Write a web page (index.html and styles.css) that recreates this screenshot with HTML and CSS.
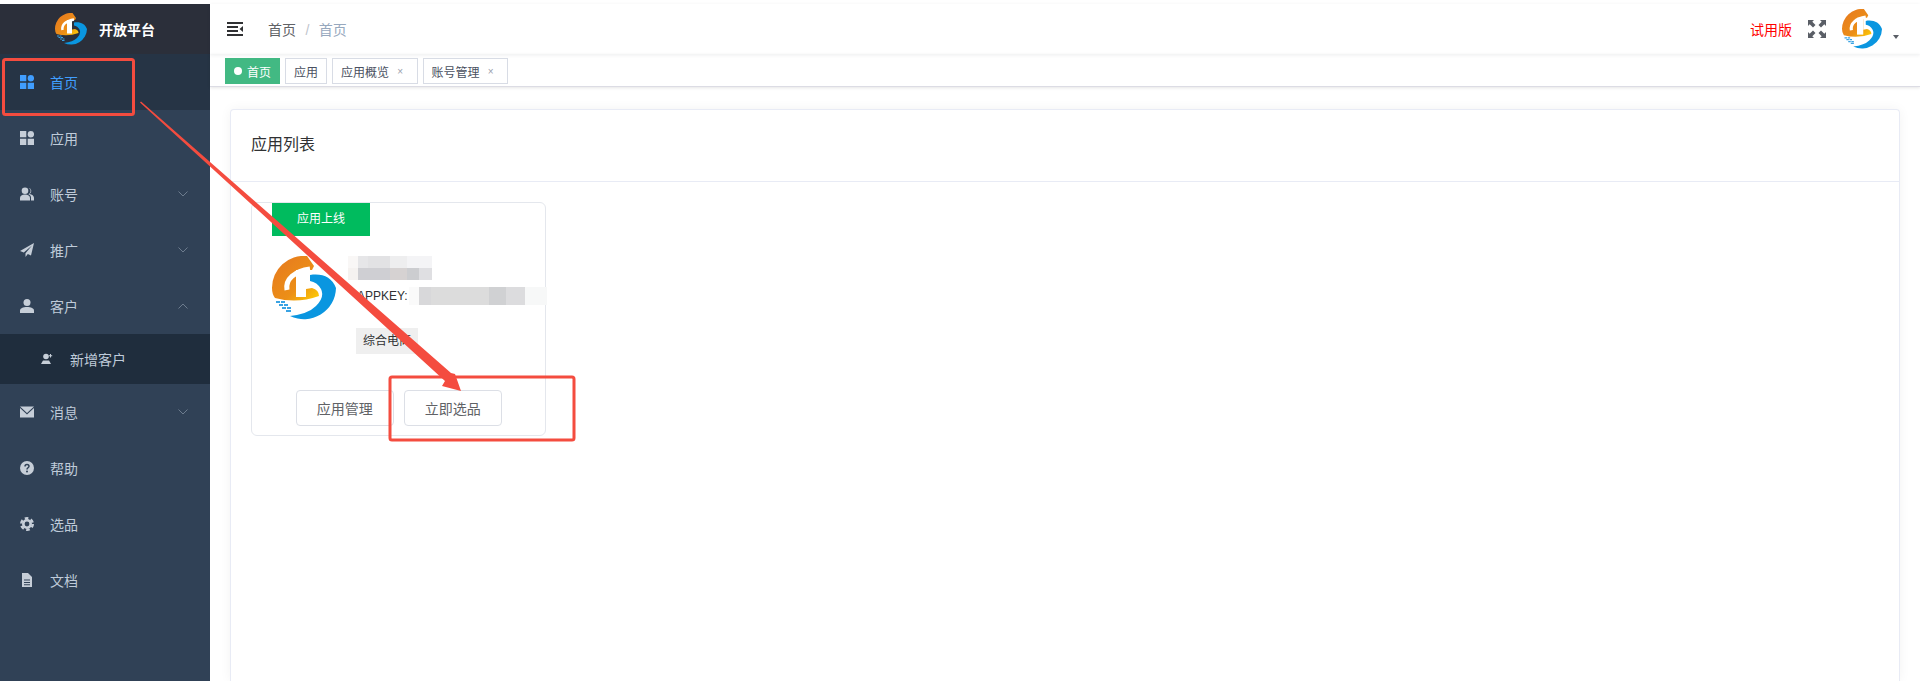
FILE: index.html
```html
<!DOCTYPE html>
<html lang="en">
  <head>
    <meta charset="UTF-8" />
    <title>开放平台</title>
    <link rel="stylesheet" href="styles.css">
  </head>
  <body>
    <!-- Shared logo -->
    <svg class="defs" width="0" height="0">
      <defs>
        <linearGradient id="logoOrange" x1="0.1" y1="0.2" x2="0.9" y2="1">
          <stop offset="0" stop-color="#e77d1e" />
          <stop offset="0.6" stop-color="#ec8f17" />
          <stop offset="1" stop-color="#fcc806" />
        </linearGradient>
        <symbol id="logo" viewBox="0 0 64 64">
          <path fill="url(#logoOrange)" d="M35 0A32 32 0 0 0 0 32Q0 38 3 42Q25 48 47 40Q47 34 40 32L34 33V14H40L42 10Z" />
          <path fill="none" stroke="#fff" stroke-width="5" d="M15 34C13 23 23 15 38 13" />
          <rect x="24" y="14" width="10" height="27" fill="#fff" />
          <path fill="#0a96e0" d="M38 19C50 17 60 21 64 32A32 32 0 0 1 18 60Q36 58 44 50Q53 41 49 33Q45 26 38 25Z" />
          <path fill="#3aa3e3" d="M4 45h4v2H4zM9 45h4v2H9zM7 48h4v2H7zM12 48h4v2h-4zM10 51h4v2h-4zM15 51h4v2h-4zM14 54h5v2h-5z" />
        </symbol>
      </defs>
    </svg>

    <div class="app">
      <!-- Sidebar -->
      <aside class="sidebar">
        <div class="brand">
          <svg class="brand-logo"><use href="#logo" /></svg>
          <span>开放平台</span>
        </div>
        <ul class="menu">
          <li class="menu-item active">
            <svg class="menu-icon" viewBox="0 0 14 14"><path d="M0 0h6.3v6.3H0zM0 7.7h6.3V14H0zM7.7 7.7H14V14H7.7z" /><circle cx="10.9" cy="3.2" r="3.2" /></svg>
            <span>首页</span>
          </li>
          <li class="menu-item">
            <svg class="menu-icon" viewBox="0 0 14 14"><path d="M0 0h6.3v6.3H0zM0 7.7h6.3V14H0zM7.7 7.7H14V14H7.7z" /><circle cx="10.9" cy="3.2" r="3.2" /></svg>
            <span>应用</span>
          </li>
          <li class="menu-item">
            <svg class="menu-icon" viewBox="0 0 14 14"><circle cx="5" cy="3.8" r="3.3" /><path d="M0 13.5V11C0 8.8 2 7.6 5 7.6S10 8.8 10 11V13.5z" /><path d="M8.6.9A3.2 3.2 0 0 1 9.6 6.9C12 7.2 14 8.6 14 10.8V13.5H11V10.5C11 9 10 7.8 8.4 7.2A3.4 3.4 0 0 0 8.6.9z" /></svg>
            <span>账号</span>
            <svg class="menu-arrow" viewBox="0 0 10 6"><path d="M.5.5 5 5 9.500.5" /></svg>
          </li>
          <li class="menu-item">
            <svg class="menu-icon" viewBox="0 0 14 14"><path d="M14 0 0 8l3.800 1.600L12 2.500 5.500 10.300V14l2.300-3L11 12.400z" /></svg>
            <span>推广</span>
            <svg class="menu-arrow" viewBox="0 0 10 6"><path d="M.5.5 5 5 9.500.5" /></svg>
          </li>
          <li class="menu-item">
            <svg class="menu-icon" viewBox="0 0 14 14"><circle cx="7" cy="3.500" r="3.500" /><path d="M0 14V11.500C0 9.300 3 8 7 8S14 9.300 14 11.500V14z" /></svg>
            <span>客户</span>
            <svg class="menu-arrow" viewBox="0 0 10 6"><path d="M.5 5.500 5 1 9.500 5.500" /></svg>
          </li>
          <li class="menu-sub">
            <svg class="sub-icon" viewBox="0 0 12 12"><circle cx="5" cy="3.500" r="2.800" /><path d="M0 11 2 7.500H8L10 11z" /><path d="M9 1h1v1.200h1.200v1H10v1.200H9V3.200H7.800v-1H9z" /></svg>
            <span>新增客户</span>
          </li>
          <li class="menu-item">
            <svg class="menu-icon" viewBox="0 0 14 11"><path d="M0 0H14L7 6.500zM0 1.500V11H14V1.500L7 8z" /></svg>
            <span>消息</span>
            <svg class="menu-arrow" viewBox="0 0 10 6"><path d="M.5.5 5 5 9.500.5" /></svg>
          </li>
          <li class="menu-item">
            <svg class="menu-icon" viewBox="0 0 14 14"><circle cx="7" cy="7" r="7" /><path class="cut" d="M5 5.500C5 2.800 9 3 9 5.300 9 6.800 7 6.800 7 8.500" /><circle class="cut-dot" cx="7" cy="10.500" r="1" /></svg>
            <span>帮助</span>
          </li>
          <li class="menu-item">
            <svg class="menu-icon" viewBox="0 0 14 14"><circle class="gear-teeth" cx="7" cy="7" r="5.800" /><circle class="gear-ring" cx="7" cy="7" r="3.700" /></svg>
            <span>选品</span>
          </li>
          <li class="menu-item">
            <svg class="menu-icon" viewBox="0 0 14 14"><path d="M2 0H8L12 4V14H2zM4 6.500V7.500H10V6.500zM4 9V10H10V9zM4 11.300V12.300H10V11.300z" fill-rule="evenodd" /></svg>
            <span>文档</span>
          </li>
        </ul>
      </aside>

      <div class="main">
        <!-- Top bar -->
        <header class="navbar">
          <svg class="hamburger" viewBox="0 0 16 14"><path d="M0 0h16v2H0zM0 4h11v2H0zM0 8h11v2H0zM0 12h16v2H0zM16 4v6l-3.500-3z" /></svg>
          <nav class="breadcrumb">
            <span>首页</span>
            <span class="sep">/</span>
            <span class="current">首页</span>
          </nav>
          <div class="navbar-right">
            <span class="trial">试用版</span>
            <svg class="fullscreen" viewBox="0 0 18 18"><path d="M0 0h6L4.300 1.700 7.500 5 5 7.500 1.700 4.300 0 6zM18 0v6l-1.700-1.700L13 7.500 10.500 5l3.200-3.300L12 0zM0 18v-6l1.700 1.700L5 10.500 7.500 13l-3.200 3.300L6 18zM18 18h-6l1.700-1.700L10.500 13l2.500-2.500 3.300 3.200L18 12z" /></svg>
            <svg class="avatar"><use href="#logo" /></svg>
            <i class="caret"></i>
          </div>
        </header>

        <!-- Tags -->
        <div class="tags">
          <span class="tag tag-active"><i class="tag-dot"></i>首页</span>
          <span class="tag">应用</span>
          <span class="tag">应用概览<i class="tag-close">×</i></span>
          <span class="tag">账号管理<i class="tag-close">×</i></span>
        </div>

        <div class="content">
          <section class="panel">
            <div class="panel-head">应用列表</div>
            <div class="panel-body">
              <div class="app-card">
                <div class="ribbon">应用上线</div>
                <div class="app-info">
                  <svg class="app-logo"><use href="#logo" /></svg>
                  <div class="app-text">
                    <div class="blur-name"></div>
                    <div class="key-row">APPKEY:<span class="blur-key"></span></div>
                    <span class="app-type">综合电商</span>
                  </div>
                </div>
                <div class="app-actions">
                  <button>应用管理</button>
                  <button>立即选品</button>
                </div>
              </div>
            </div>
          </section>
        </div>
      </div>
    </div>

    <!-- Red annotation drawn over the page -->
    <svg class="markup" viewBox="0 0 1920 681">
      <rect x="3.500" y="59.500" width="130" height="55" rx="2" />
      <rect x="390" y="377" width="184" height="63" rx="2" />
      <polygon points="140,102.500 141,101.500 451,373 455,374 461,391 442,386 445,381" />
    </svg>
  </body>
</html>
```

FILE: styles.css
```css
* {
  box-sizing: border-box;
}
html,
body {
  margin: 0;
  padding: 0;
  height: 100%;
  overflow: hidden;
  background-color: #ffffff;
  font-family: "Liberation Sans", "Noto Sans CJK SC", sans-serif;
  color: #303133;
}
.defs {
  position: absolute;
}
.app {
  display: flex;
  height: 100vh;
  padding-top: 4px;
}

/* Sidebar */
.sidebar {
  width: 210px;
  flex-shrink: 0;
  background-color: #304156;
}
.brand {
  display: flex;
  align-items: center;
  height: 50px;
  padding-left: 55px;
  background-color: #2b2f3a;
  color: #ffffff;
  font-size: 14px;
  font-weight: bold;
}
.brand-logo {
  width: 32px;
  height: 32px;
  margin-right: 12px;
}
.menu {
  list-style: none;
  margin: 0;
  padding: 0;
  font-size: 14px;
  color: #bfcbd9;
}
.menu-item {
  display: flex;
  align-items: center;
  height: 56px;
  padding: 0 22px 0 20px;
}
.menu-item.active {
  background-color: #263445;
  color: #409eff;
}
.menu-icon {
  width: 14px;
  height: 14px;
  margin-right: 16px;
  fill: #c6ced8;
}
.active .menu-icon {
  fill: #409eff;
}
.menu-arrow {
  width: 10px;
  height: 6px;
  margin-left: auto;
  fill: none;
  stroke: #6d7c8e;
}
.menu-sub {
  display: flex;
  align-items: center;
  height: 50px;
  padding-left: 41px;
  background-color: #1f2d3d;
}
.sub-icon {
  width: 12px;
  height: 12px;
  margin-right: 17px;
  fill: #c6ced8;
}
.cut {
  fill: none;
  stroke: #304156;
  stroke-width: 1.500;
}
.cut-dot {
  fill: #304156;
}
.gear-teeth {
  fill: none;
  stroke: #c6ced8;
  stroke-width: 2.400;
  stroke-dasharray: 3.600 2.500;
}
.gear-ring {
  fill: none;
  stroke: #c6ced8;
  stroke-width: 2.600;
}

/* Top bar */
.main {
  flex: 1;
  min-width: 0;
  display: flex;
  flex-direction: column;
}
.navbar {
  display: flex;
  align-items: center;
  height: 50px;
  padding: 0 21px 0 17px;
  box-shadow: 0 1px 4px rgba(0, 21, 41, 0.08);
}
.hamburger {
  width: 16px;
  height: 14px;
  margin-right: 25px;
  fill: #303133;
}
.breadcrumb {
  font-size: 14px;
  color: #606266;
}
.breadcrumb .sep {
  margin: 0 5.500px;
  color: #c0c4cc;
}
.breadcrumb .current {
  color: #97a8be;
}
.navbar-right {
  display: flex;
  align-items: center;
  margin-left: auto;
}
.trial {
  font-size: 14px;
  color: #ff0000;
  margin-right: 16px;
}
.fullscreen {
  width: 18px;
  height: 18px;
  margin-right: 16px;
  fill: #5a5e66;
}
.avatar {
  width: 40px;
  height: 40px;
}
.caret {
  width: 0;
  height: 0;
  margin: 16px 0 0 11px;
  border-left: 3.500px solid transparent;
  border-right: 3.500px solid transparent;
  border-top: 4px solid #5a5e66;
}

/* Tags */
.tags {
  display: flex;
  gap: 5px;
  height: 33px;
  padding: 4px 0 0 15px;
  border-bottom: 1px solid #dcdce4;
  box-shadow: 0 1px 3px rgba(0, 0, 0, 0.1);
}
.tag {
  display: flex;
  align-items: center;
  height: 26px;
  padding: 0 8px;
  border: 1px solid #d8dce5;
  font-size: 12px;
  color: #495060;
}
.tag-active {
  background-color: #42b983;
  border-color: #42b983;
  color: #ffffff;
}
.tag-dot {
  width: 8px;
  height: 8px;
  margin-right: 5px;
  border-radius: 50%;
  background-color: #ffffff;
}
.tag-close {
  width: 10px;
  margin: 0 3.500px 0 6px;
  font-style: normal;
  font-size: 10px;
  text-align: center;
  color: #9aa0ac;
}

/* Content */
.content {
  flex: 1;
  min-height: 0;
  padding: 22px 20px 0;
}
.panel {
  height: 100%;
  border: 1px solid #e8ebf5;
  border-bottom: none;
  border-radius: 4px 4px 0 0;
  background-color: #ffffff;
  box-shadow: 0 0 12px rgba(0, 0, 0, 0.05);
}
.panel-head {
  display: flex;
  align-items: center;
  height: 72px;
  padding: 0 0 6px 20px;
  border-bottom: 1px solid #e8ebf5;
  font-size: 16px;
}
.panel-body {
  padding: 20px;
}
.app-card {
  width: 295px;
  height: 234px;
  border: 1px solid #e4e7ed;
  border-radius: 6px;
}
.ribbon {
  width: 98px;
  height: 33px;
  margin-left: 20px;
  line-height: 33px;
  text-align: center;
  font-size: 12px;
  color: #ffffff;
  background-color: #00bb5e;
}
.app-info {
  display: flex;
  height: 119px;
  margin-top: 20px;
  padding-left: 20px;
}
.app-logo {
  width: 64px;
  height: 64px;
  flex-shrink: 0;
}
.app-text {
  margin-left: 12px;
  font-size: 12px;
}
.blur-name {
  width: 84px;
  height: 24px;
  background:
    linear-gradient(90deg, #f9f7f6 0 12%, #e6e6e8 12% 24%, #e2e2e4 24% 50%, #eeeeef 50% 70%, #f4f4f6 70%) top / 100% 50% no-repeat,
    linear-gradient(90deg, #f5f2f0 0 12%, #cfcfd3 12% 50%, #d6d2d2 50% 70%, #cccdd0 70% 85%, #dfdfe2 85%) bottom / 100% 50% no-repeat;
}
.key-row {
  display: flex;
  align-items: center;
  width: 200px;
  height: 18px;
  margin-top: 7px;
  padding-left: 9px;
}
.blur-key {
  width: 138px;
  height: 18px;
  margin-left: 1px;
  background: linear-gradient(90deg, #fafafa 0 7%, #d8d8da 7% 16%, #dcdcdc 16% 58%, #d0d1d3 58% 70%, #dcdcde 70% 84%, #f7f8f8 84%);
}
.app-type {
  display: block;
  width: 62px;
  height: 26px;
  margin: 23px 0 0 8px;
  line-height: 26px;
  text-align: center;
  background-color: #efefef;
}
.app-actions {
  display: flex;
  gap: 10.500px;
  margin-top: 15px;
  padding-left: 44px;
}
.app-actions button {
  width: 97.500px;
  height: 36px;
  padding: 0;
  border: 1px solid #dcdfe6;
  border-radius: 4px;
  background-color: #ffffff;
  font-family: inherit;
  font-size: 14px;
  color: #606266;
}

/* Annotation */
.markup {
  position: absolute;
  top: 0;
  left: 0;
  width: 1920px;
  height: 681px;
  pointer-events: none;
}
.markup rect {
  fill: none;
  stroke: #f44c3f;
  stroke-width: 3;
}
.markup polygon {
  fill: #f44c3f;
}
```
